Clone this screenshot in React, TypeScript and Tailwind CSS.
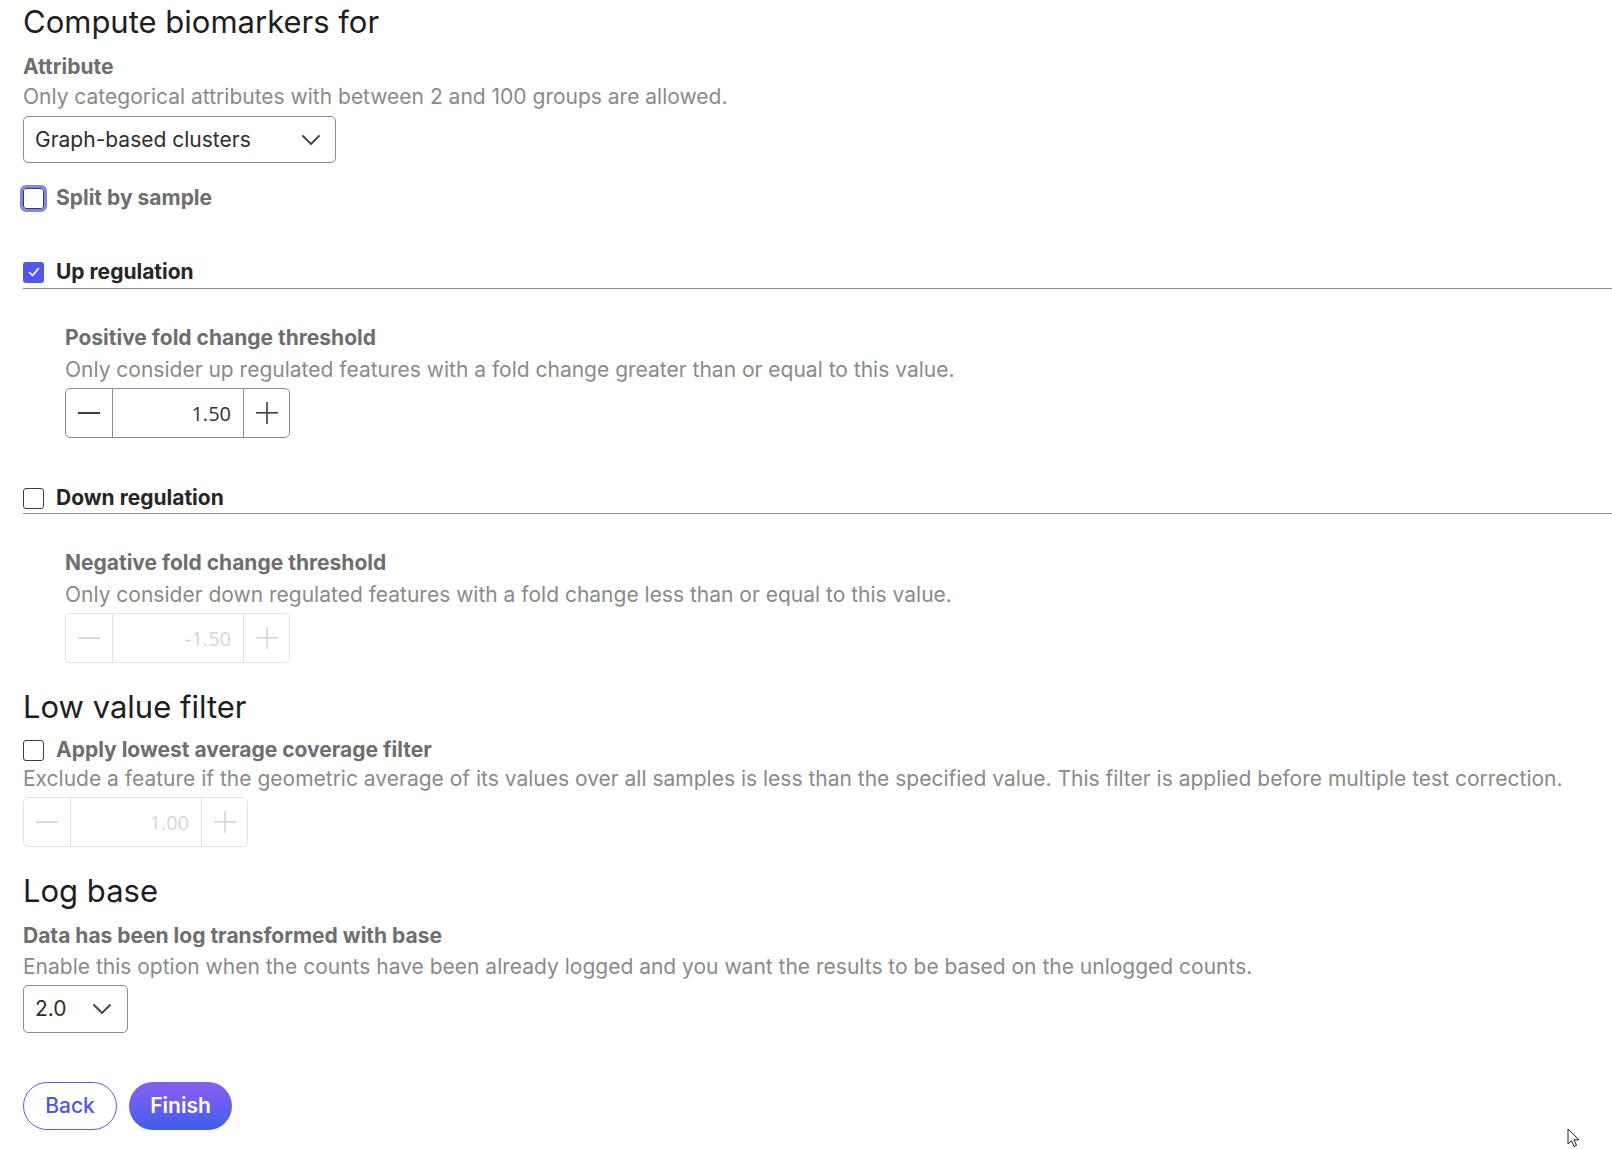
const font = { fontFamily: 'Inter, "Noto Sans", sans-serif' }

function Checkbox({ checked = false, focused = false }: { checked?: boolean; focused?: boolean }) {
  return (
    <span
      className={
        'flex h-[21px] w-[21px] shrink-0 items-center justify-center rounded-[3px] ' +
        (checked ? 'bg-[#5159ec]' : 'border-[1.5px] border-[#3d3d3d] bg-white') +
        (focused ? ' outline-[3px] outline-[#7f86f2] outline-offset-0' : '')
      }
      style={focused ? { outlineStyle: 'solid' } : undefined}
    >
      {checked && (
        <svg width="14" height="14" viewBox="0 0 14 14" fill="none">
          <path d="M2.5 7.5 L5.5 10.5 L11.5 3.5" stroke="white" strokeWidth="1.6" strokeLinecap="round" strokeLinejoin="round" />
        </svg>
      )}
    </span>
  )
}

function Chevron() {
  return (
    <svg width="20" height="12" viewBox="0 0 20 12" fill="none">
      <path d="M2 2 L10 10 L18 2" stroke="#4a4a4a" strokeWidth="2" strokeLinecap="round" strokeLinejoin="round" />
    </svg>
  )
}

function Stepper({ value, disabled = false }: { value: string; disabled?: boolean }) {
  const border = disabled ? 'border-[#e2e2e2]' : 'border-[#8c8c8c]'
  const icon = disabled ? '#d6d6d6' : '#3f3f3f'
  return (
    <div className={'flex h-[50px] w-[225px] rounded-[5px] border ' + border}>
      <div className={'flex w-[47px] items-center justify-center border-r ' + border}>
        <svg width="22" height="2" viewBox="0 0 22 2">
          <rect x="0" y="0" width="22" height="2" fill={icon} />
        </svg>
      </div>
      <div
        className={'flex w-[130px] items-center justify-end pr-[12px] text-[20px] ' + (disabled ? 'text-[#d6d6d6]' : 'text-[#333]')}
        style={{ fontFamily: '"Open Sans", sans-serif' }}
      >
        <span className="pt-[2px]">{value}</span>
      </div>
      <div className={'flex flex-1 items-center justify-center border-l ' + border}>
        <svg width="22" height="22" viewBox="0 0 22 22">
          <rect x="0" y="10" width="22" height="1.6" fill={icon} />
          <rect x="10.2" y="0" width="1.6" height="22" fill={icon} />
        </svg>
      </div>
    </div>
  )
}

export default function App() {
  return (
    <div className="relative min-h-[1149px] w-full overflow-hidden bg-white pl-[23px]" style={font}>
      <div className="flex flex-col">
        <h1 className="text-[31px] leading-[44px] font-normal text-[#1e1e1e]">Compute biomarkers for</h1>
        <div className="mt-[9px] text-[21px] leading-[28px] font-bold text-[#6e6e6e]">Attribute</div>
        <p className="mt-[2px] text-[21px] leading-[28px] text-[#8a8a8a]">
          Only categorical attributes with between 2 and 100 groups are allowed.
        </p>
        <div className="mt-[5px] flex h-[47px] w-[313px] items-center justify-between rounded-[5px] border border-[#8c8c8c] pr-[14px] pl-[11px]">
          <span className="text-[21px] text-[#2e2e2e]">Graph-based clusters</span>
          <Chevron />
        </div>

        <label className="mt-[21px] flex h-[28px] items-center gap-[12px]">
          <Checkbox focused />
          <span className="text-[21px] font-bold text-[#6e6e6e]">Split by sample</span>
        </label>

        <label className="mt-[46px] flex h-[28px] items-center gap-[12px]">
          <Checkbox checked />
          <span className="text-[21px] font-bold text-[#262626]">Up regulation</span>
        </label>
        <div className="mt-[2px] h-px bg-[#8f8f8f]" />

        <div className="flex flex-col pl-[42px]">
          <div className="mt-[35px] text-[21px] leading-[28px] font-bold text-[#6e6e6e]">Positive fold change threshold</div>
          <p className="mt-[4px] text-[21px] leading-[28px] text-[#8a8a8a]">
            Only consider up regulated features with a fold change greater than or equal to this value.
          </p>
          <div className="mt-[4px]">
            <Stepper value="1.50" />
          </div>
        </div>

        <label className="mt-[46px] flex h-[28px] items-center gap-[12px]">
          <Checkbox />
          <span className="text-[21px] font-bold text-[#262626]">Down regulation</span>
        </label>
        <div className="mt-[1px] h-px bg-[#8f8f8f]" />

        <div className="flex flex-col pl-[42px]">
          <div className="mt-[35px] text-[21px] leading-[28px] font-bold text-[#6e6e6e]">Negative fold change threshold</div>
          <p className="mt-[4px] text-[21px] leading-[28px] text-[#8a8a8a]">
            Only consider down regulated features with a fold change less than or equal to this value.
          </p>
          <div className="mt-[4px]">
            <Stepper value="-1.50" disabled />
          </div>
        </div>

        <h2 className="mt-[22px] text-[31px] leading-[44px] font-normal text-[#1e1e1e]">Low value filter</h2>
        <label className="mt-[10px] flex h-[22px] items-center gap-[12px]">
          <Checkbox />
          <span className="text-[21px] font-bold text-[#6e6e6e]">Apply lowest average coverage filter</span>
        </label>
        <p className="mt-[6px] text-[21px] leading-[24px] text-[#8a8a8a]">
          Exclude a feature if the geometric average of its values over all samples is less than the specified value. This filter is applied before multiple test correction.
        </p>
        <div className="mt-[6px]">
          <Stepper value="1.00" disabled />
        </div>

        <h2 className="mt-[22px] text-[31px] leading-[44px] font-normal text-[#1e1e1e]">Log base</h2>
        <div className="mt-[9px] text-[21px] leading-[28px] font-bold text-[#6e6e6e]">Data has been log transformed with base</div>
        <p className="mt-[3px] text-[21px] leading-[28px] text-[#8a8a8a]">
          Enable this option when the counts have been already logged and you want the results to be based on the unlogged counts.
        </p>
        <div className="mt-[4px] flex h-[48px] w-[105px] items-center justify-between rounded-[5px] border border-[#8c8c8c] pr-[15px] pl-[11px]">
          <span className="text-[21px] text-[#2e2e2e]">2.0</span>
          <Chevron />
        </div>

        <div className="mt-[49px] flex gap-[12px]">
          <button className="h-[48px] w-[94px] rounded-full border border-[#5560e8] bg-white text-[21px] font-medium text-[#4f58e2]">
            Back
          </button>
          <button className="h-[48px] w-[103px] rounded-full bg-gradient-to-b from-[#8a5cf4] to-[#3a5ee8] text-[21px] font-semibold text-white">
            Finish
          </button>
        </div>
      </div>

      <svg className="absolute top-[1128px] left-[1567px]" width="14" height="20" viewBox="0 0 14 20">
        <path d="M1 1 L1 16 L4.5 12.5 L7 18.5 L9.5 17.5 L7 11.8 L12 11.8 Z" fill="white" stroke="#222" strokeWidth="1" strokeLinejoin="round" />
      </svg>
    </div>
  )
}
